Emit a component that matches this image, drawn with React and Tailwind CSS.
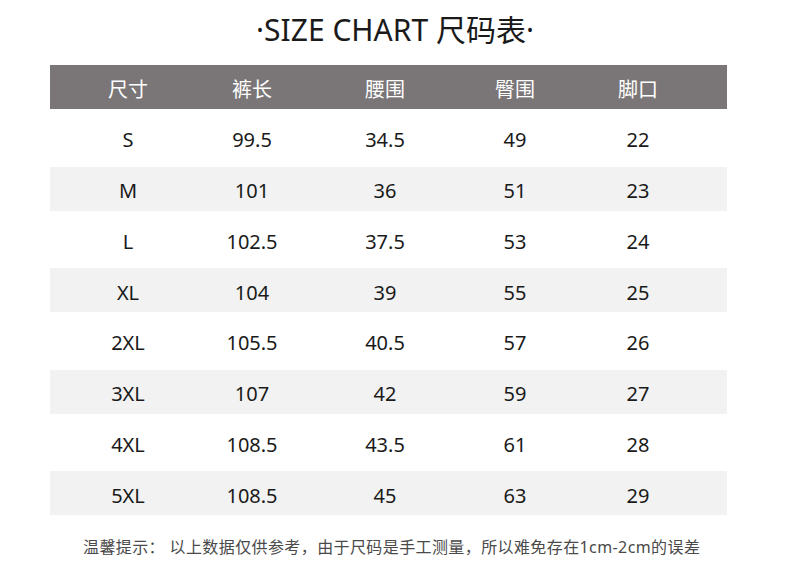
import React from "react";

const rows = [
  ["S", "99.5", "34.5", "49", "22"],
  ["M", "101", "36", "51", "23"],
  ["L", "102.5", "37.5", "53", "24"],
  ["XL", "104", "39", "55", "25"],
  ["2XL", "105.5", "40.5", "57", "26"],
  ["3XL", "107", "42", "59", "27"],
  ["4XL", "108.5", "43.5", "61", "28"],
  ["5XL", "108.5", "45", "63", "29"],
];

const headers = ["尺寸", "裤长", "腰围", "臀围", "脚口"];

const font = { fontFamily: '"Noto Sans", "Noto Sans CJK SC", sans-serif' };

export default function App() {
  return (
    <div className="w-[790px] h-[578px] bg-white overflow-hidden" style={font}>
      <div className="pt-[10px] h-[50px] text-center text-[30px] leading-[40px] text-[#1a1a1a]">
        ·SIZE CHART 尺码表·
      </div>
      <div className="ml-[50px] mt-[15px] w-[677px]">
        <div className="grid grid-cols-[156px_92px_174px_86px_160px_1fr] h-[44px] pt-[6px] items-center bg-[#7a7677] text-white text-[20px]">
          {headers.map((h) => (
            <div key={h} className="text-center">{h}</div>
          ))}
          <div />
        </div>
        {rows.map((r, i) => (
          <div
            key={r[0]}
            className={
              i % 2 === 1
                ? "grid grid-cols-[156px_92px_174px_86px_160px_1fr] h-[44px] pt-[5px] items-center bg-[#f2f2f2] text-[20px] text-[#1a1a1a]"
                : "grid grid-cols-[156px_92px_174px_86px_160px_1fr] h-[57.5px] pt-[5px] items-center bg-white text-[20px] text-[#1a1a1a]"
            }
          >
            {r.map((c, j) => (
              <div key={j} className="text-center">{c}</div>
            ))}
            <div />
          </div>
        ))}
      </div>
      <div className="mt-[20px] pl-[83px] text-[16px] leading-[24px] tracking-[0.4px] text-[#4a4a4a] whitespace-pre">
        温馨提示： 以上数据仅供参考，由于尺码是手工测量，所以难免存在1cm-2cm的误差
      </div>
    </div>
  );
}
